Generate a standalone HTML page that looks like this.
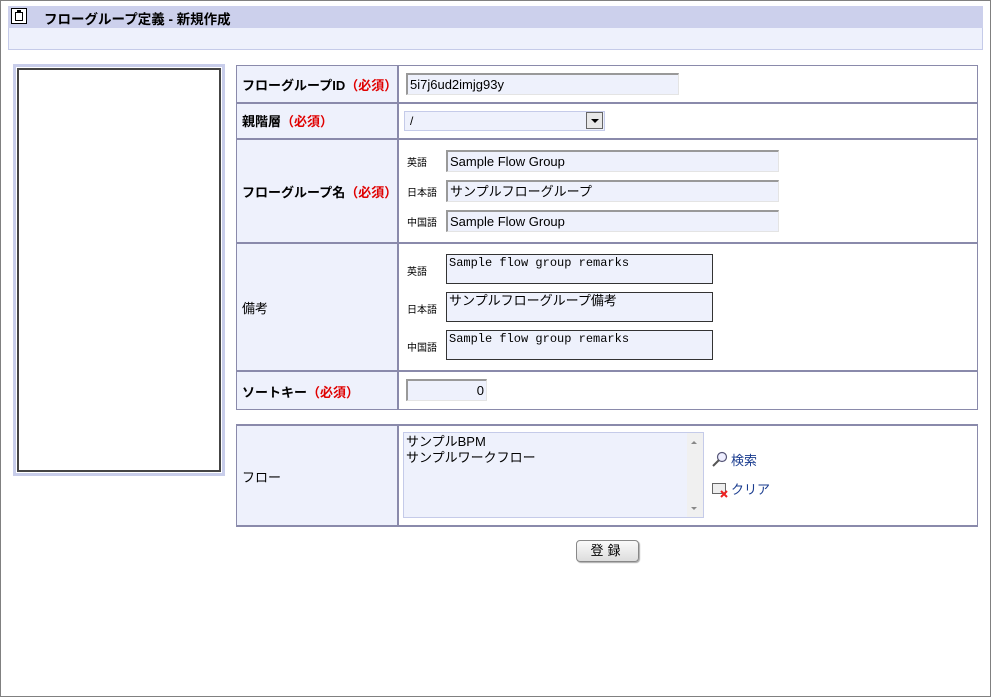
<!DOCTYPE html>
<html><head><meta charset="utf-8"><style>
*{margin:0;padding:0;box-sizing:border-box}
body{width:991px;height:697px;position:relative;background:#fff;font-family:"Liberation Sans","Noto Sans CJK JP",sans-serif;font-size:12px;color:#000;overflow:hidden}
.a{position:absolute}
.frame{left:0;top:0;width:991px;height:697px;border:1px solid #808080}
.lab{font-weight:bold;font-size:13px}
.req{color:#e00000}
.inp{position:absolute;background:#eef1fc;border-top:2px solid #999;border-left:2px solid #999;border-right:1px solid #e4e4e4;border-bottom:1px solid #e4e4e4;font-size:13px;padding:1px 2px;line-height:17px;white-space:nowrap}
.ta{position:absolute;background:#eef1fc;border:1px solid #333;font-family:"Liberation Mono","Noto Sans CJK JP",monospace;font-size:12px;padding:1px 2px;line-height:14px}
.sm{font-size:10px;position:absolute}
.hl{position:absolute;background:#8a8aab;height:2px}
.vl{position:absolute;background:#8a8aab;width:1px}
</style></head><body>
<div class="a frame"></div>
<div class="a" style="left:8px;top:6px;width:975px;height:22px;background:#ccd0ec"></div>
<div class="a" style="left:8px;top:28px;width:975px;height:22px;background:#eef1fc;border:1px solid #c5cbe9;border-top:none"></div>
<div class="a" style="left:11px;top:8px;width:16px;height:16px;border:1px solid #000;background:#fff"><div class="a" style="left:3px;top:3px;width:8px;height:9px;border:1px solid #000"></div><div class="a" style="left:5px;top:1px;width:4px;height:3px;background:#000"></div></div>
<div class="a lab" style="left:44px;top:8px;font-size:13.5px">フローグループ定義 - 新規作成</div>

<div class="a" style="left:13px;top:64px;width:212px;height:412px;border:3px solid #c8cdea"></div>
<div class="a" style="left:17px;top:68px;width:204px;height:404px;border:2px solid #444"></div>

<div class="a" style="left:236px;top:65px;width:162px;height:344px;background:#eef1fc"></div>
<div class="a" style="left:236px;top:65px;width:742px;height:345px;border:1px solid #8a8aab"></div>
<div class="hl" style="left:236px;top:102px;width:742px"></div>
<div class="hl" style="left:236px;top:138px;width:742px"></div>
<div class="hl" style="left:236px;top:242px;width:742px"></div>
<div class="hl" style="left:236px;top:370px;width:742px"></div>
<div class="vl" style="left:397px;top:65px;height:345px;width:2px"></div>

<div class="a lab" style="left:242px;top:75px">フローグループID<span class="req">（必須）</span></div>
<div class="a lab" style="left:242px;top:111px">親階層<span class="req">（必須）</span></div>
<div class="a lab" style="left:242px;top:182px">フローグループ名<span class="req">（必須）</span></div>
<div class="a" style="left:242px;top:298px;font-size:13px">備考</div>
<div class="a lab" style="left:242px;top:382px">ソートキー<span class="req">（必須）</span></div>

<div class="inp" style="left:406px;top:73px;width:273px;height:22px">5i7j6ud2imjg93y</div>
<div class="a" style="left:404px;top:111px;width:201px;height:20px;background:#eef1fc;border:1px solid #c5cbe9;padding:2px 5px">/</div>
<div class="a" style="left:586px;top:112px;width:17px;height:17px;border:1px solid #666;background:#e8e8e8"><div class="a" style="left:4px;top:6px;border-left:4px solid transparent;border-right:4px solid transparent;border-top:4px solid #000"></div></div>

<div class="sm" style="left:407px;top:154px">英語</div>
<div class="sm" style="left:407px;top:184px">日本語</div>
<div class="sm" style="left:407px;top:214px">中国語</div>
<div class="inp" style="left:446px;top:150px;width:333px;height:22px">Sample Flow Group</div>
<div class="inp" style="left:446px;top:180px;width:333px;height:22px">サンプルフローグループ</div>
<div class="inp" style="left:446px;top:210px;width:333px;height:22px">Sample Flow Group</div>

<div class="sm" style="left:407px;top:263px">英語</div>
<div class="sm" style="left:407px;top:301px">日本語</div>
<div class="sm" style="left:407px;top:339px">中国語</div>
<div class="ta" style="left:446px;top:254px;width:267px;height:30px">Sample flow group remarks</div>
<div class="ta" style="left:446px;top:292px;width:267px;height:30px;font-family:'Liberation Sans','Noto Sans CJK JP',sans-serif;font-size:13px">サンプルフローグループ備考</div>
<div class="ta" style="left:446px;top:330px;width:267px;height:30px">Sample flow group remarks</div>

<div class="inp" style="left:406px;top:379px;width:81px;height:22px;text-align:right">0</div>

<div class="a" style="left:236px;top:424px;width:162px;height:102px;background:#eef1fc"></div>
<div class="a" style="left:236px;top:424px;width:742px;height:103px;border:1px solid #8a8aab;border-width:2px 1px 2px 1px"></div>
<div class="vl" style="left:397px;top:424px;height:103px;width:2px"></div>
<div class="a" style="left:242px;top:467px;font-size:13px">フロー</div>
<div class="a" style="left:403px;top:432px;width:301px;height:86px;background:#eef1fc;border:1px solid #c5cbe9;padding:1px 2px;line-height:16px;font-size:13px">サンプルBPM<br>サンプルワークフロー</div>
<div class="a" style="left:687px;top:433px;width:16px;height:84px;background:#f0f0f0"></div>
<div class="a" style="left:691px;top:441px;border-left:3px solid transparent;border-right:3px solid transparent;border-bottom:3px solid #888"></div>
<div class="a" style="left:691px;top:507px;border-left:3px solid transparent;border-right:3px solid transparent;border-top:3px solid #888"></div>

<svg class="a" style="left:712px;top:451px" width="16" height="16"><circle cx="10" cy="6" r="4.5" fill="#eef" stroke="#557" stroke-width="1.2"/><line x1="7" y1="9" x2="1" y2="15" stroke="#555" stroke-width="2"/></svg>
<div class="a" style="left:731px;top:450px;color:#1a3c8f;font-size:13px">検索</div>
<svg class="a" style="left:712px;top:482px" width="18" height="16"><rect x="0.5" y="1.5" width="13" height="10" fill="#eee" stroke="#666"/><path d="M9 9l6 6M15 9l-6 6" stroke="#e22" stroke-width="2"/></svg>
<div class="a" style="left:731px;top:479px;color:#1a3c8f;font-size:13px">クリア</div>

<div class="a" style="left:576px;top:540px;width:63px;height:22px;border:1px solid #888;border-radius:4px;background:linear-gradient(#fafafa,#ddd);text-align:center;font-size:13px;line-height:20px;letter-spacing:4px;box-shadow:1px 1px 1px #aaa">登録</div>
</body></html>
